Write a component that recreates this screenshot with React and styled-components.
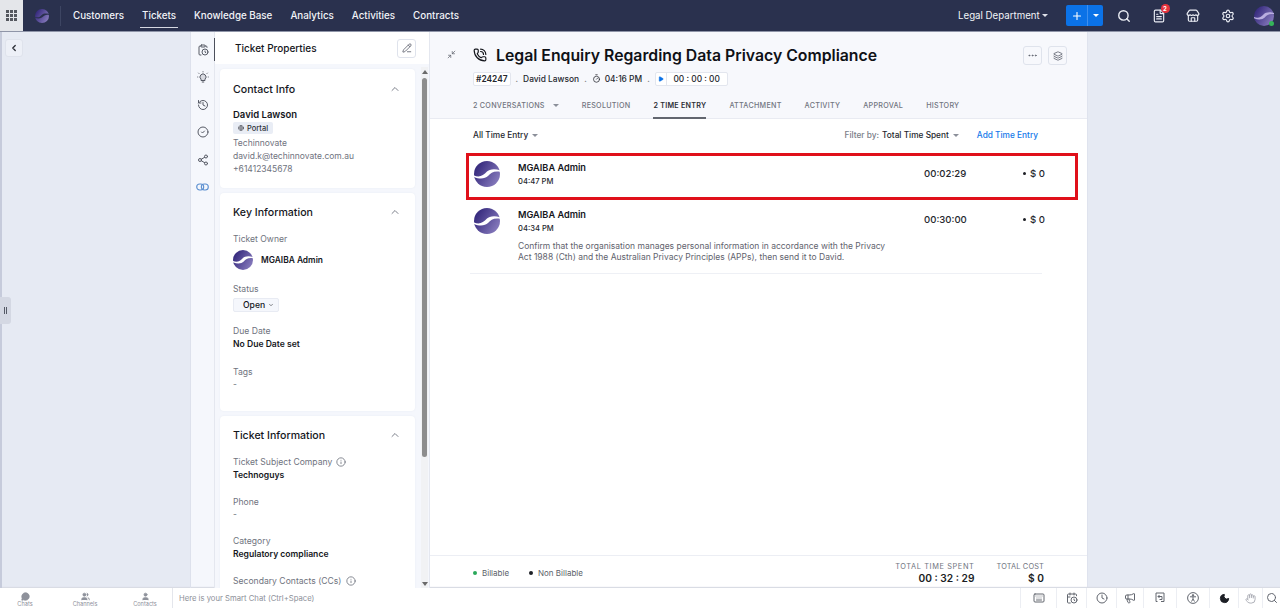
import React from 'react';
import styled, { createGlobalStyle } from 'styled-components';
import {
  CalendarClock,
  ChevronDown,
  ChevronLeft,
  ChevronUp,
  CircleCheck,
  ClipboardClock,
  Clock,
  Ellipsis,
  FileText,
  Globe,
  Hand,
  History,
  Info,
  Keyboard,
  Layers,
  Megaphone,
  MessageCircle,
  Minimize2,
  Moon,
  PencilLine,
  PhoneCall,
  Play,
  Plus,
  Search,
  Settings,
  Share2,
  Store,
  Timer,
  User,
  Users
} from 'lucide-react';

const GlobalStyle = createGlobalStyle`
  html, body {
    margin: 0;
    height: 100%;
    overflow: hidden;
    font-family: Inter, "Liberation Sans", sans-serif;
    color: #14161c;
  }
  #root {
    height: 100%;
  }
  * {
    box-sizing: border-box;
  }
`;

const Page = styled.div`
  width: 1280px;
  height: 608px;
  display: flex;
  flex-direction: column;
  background: #e6eaf3;
`;

const TopBar = styled.header`
  height: 32px;
  flex: none;
  display: flex;
  align-items: center;
  background: #2a314e;
  border-bottom: 1px solid #8f95a8;
  color: #f2f4f8;
`;

const AppsBox = styled.div`
  width: 23px;
  height: 31px;
  background: #e4e6ea;
  display: grid;
  grid-template-columns: repeat(3, 3px);
  grid-auto-rows: 3px;
  gap: 1px;
  align-content: center;
  justify-content: center;
`;

const AppsDot = styled.span`
  background: #55585f;
`;

const LogoSlot = styled.div`
  width: 38px;
  height: 20px;
  margin-right: 12px;
  padding-left: 12px;
  display: flex;
  align-items: center;
  border-right: 1px solid #3d4562;
`;

const Nav = styled.nav`
  display: flex;
  gap: 18px;
  align-self: stretch;
`;

const NavItem = styled.a`
  position: relative;
  display: flex;
  align-items: center;
  font-size: 9.8px;
  font-weight: 500;

  ${p => p.$active && `
    &::after {
      content: '';
      position: absolute;
      left: -2px;
      right: -2px;
      bottom: 3px;
      height: 1px;
      background: #d5d8e2;
    }
  `}
`;

const TopRight = styled.div`
  margin-left: auto;
  display: flex;
  align-items: center;
  height: 100%;
`;

const Department = styled.span`
  font-size: 9.7px;
  width: 84px;
  white-space: nowrap;
`;

const Caret = styled.span`
  display: inline-block;
  width: 0;
  height: 0;
  flex: none;
  border-left: ${p => p.$size || 3}px solid transparent;
  border-right: ${p => p.$size || 3}px solid transparent;
  border-top: ${p => p.$size || 3}px solid ${p => p.$color || '#8b8f99'};
`;

const SplitButton = styled.div`
  width: 37px;
  height: 21px;
  margin-left: 18px;
  display: flex;
  border-radius: 2px;
  background: #0b72e7;
  color: #fff;

  & > span {
    display: flex;
    align-items: center;
    justify-content: center;
  }
  & > span:first-child {
    width: 22px;
    border-right: 1px solid #3f8fee;
  }
  & > span:last-child {
    flex: 1;
  }
`;

const TopIcons = styled.div`
  display: flex;
  margin-left: 4px;
`;

const TopIcon = styled.span`
  position: relative;
  display: flex;
  justify-content: center;
  width: 34.5px;
  color: #e9ecf3;
`;

const Badge = styled.span`
  position: absolute;
  top: -5px;
  left: 19px;
  width: 9px;
  height: 9px;
  border-radius: 50%;
  background: #e5333d;
  color: #fff;
  font-size: 6px;
  line-height: 9px;
  font-weight: 700;
  text-align: center;
`;

const AvatarSlot = styled.span`
  position: relative;
  display: flex;
  margin: 0 6px 0 9px;

  &::after {
    content: '';
    position: absolute;
    right: 0;
    bottom: 0;
    width: 5px;
    height: 5px;
    border-radius: 50%;
    background: #35b45a;
  }
`;

const Body = styled.div`
  flex: 1;
  min-height: 0;
  display: flex;
`;

const LeftGutter = styled.aside`
  position: relative;
  width: 191px;
  flex: none;
  padding: 7px 0 0 3px;
  border-left: 2px solid #c6cbdb;
  border-right: 1px solid #dde1ec;
`;

const IconButton = styled.button`
  width: ${p => p.$size || 18}px;
  height: ${p => p.$size || 18}px;
  padding: 0;
  display: flex;
  align-items: center;
  justify-content: center;
  background: ${p => p.$bg || 'transparent'};
  border: 1px solid #dfe3ec;
  border-radius: 3px;
  color: #5e626d;
`;

const Handle = styled.div`
  position: absolute;
  left: -2px;
  top: 265px;
  width: 11px;
  height: 27px;
  display: flex;
  align-items: center;
  justify-content: center;
  gap: 1px;
  background: #d4d8e3;
  border-radius: 0 3px 3px 0;

  & > i {
    width: 1px;
    height: 7px;
    background: #555a66;
  }
`;

const Rail = styled.div`
  width: 23px;
  flex: none;
  display: flex;
  flex-direction: column;
  align-items: center;
  background: #f5f7fc;
  padding-top: 12px;
  gap: 15.4px;
  color: #565a65;
`;

const RailIcon = styled.span`
  display: flex;
  height: 12px;
  color: ${p => p.$color || 'inherit'};
`;

const Properties = styled.section`
  position: relative;
  width: 216px;
  flex: none;
  display: flex;
  flex-direction: column;
  background: #f5f7fc;
  border-left: 1px solid #e4e7ef;
  border-right: 1px solid #e4e7ef;

  &::before {
    content: '';
    position: absolute;
    left: -1px;
    top: 6px;
    width: 1px;
    height: 23px;
    background: #4c505c;
  }
`;

const PropHeader = styled.div`
  height: 32px;
  flex: none;
  display: flex;
  align-items: center;
  justify-content: space-between;
  padding: 0 13px 0 20px;
  background: #fff;
  font-size: 10px;
  font-weight: 500;
`;

const PropBody = styled.div`
  flex: 1;
  min-height: 0;
  overflow: hidden;
  display: flex;
  flex-direction: column;
  gap: 5px;
  padding: 5px 14px 0 5px;
`;

const Card = styled.div`
  flex: none;
  height: ${p => p.$height}px;
  background: #fff;
  border-radius: 4px;
  box-shadow: 0 0 2px #e7eaf1;
  padding: ${p => p.$top ?? 13}px 14px 0 13px;
`;

const CardTitle = styled.div`
  display: flex;
  justify-content: space-between;
  align-items: center;
  height: 12px;
  margin-bottom: ${p => p.$gap ?? 15}px;
  font-size: 10.6px;
  font-weight: 500;
  color: #14161c;

  & > svg {
    color: #7d818c;
  }
`;

const ContactName = styled.div`
  font-size: 9.5px;
  font-weight: 600;
  line-height: 12px;
`;

const PortalTag = styled.span`
  width: 40px;
  height: 12px;
  margin: 1px 0 3px;
  display: flex;
  align-items: center;
  justify-content: center;
  gap: 3px;
  background: #e9edf5;
  border-radius: 2px;
  font-size: 7.5px;
  font-weight: 500;
  color: #30333b;
`;

const MutedLine = styled.div`
  font-size: 8.5px;
  line-height: 13px;
  color: #6f737e;
`;

const Field = styled.div`
  margin-bottom: ${p => p.$gap ?? 14}px;
`;

const FieldLabel = styled.div`
  display: flex;
  align-items: center;
  gap: 4px;
  font-size: 8.6px;
  line-height: 12px;
  color: #6f737e;
`;

const FieldValue = styled.div`
  font-size: 8.6px;
  line-height: 14px;
  font-weight: 600;
  color: #15171c;
`;

const Owner = styled.div`
  display: flex;
  align-items: center;
  gap: 8px;
  margin-top: 5px;
  font-size: 8.4px;
  font-weight: 600;
`;

const StatusPick = styled.span`
  width: 46px;
  height: 14px;
  margin-top: 3px;
  display: flex;
  align-items: center;
  gap: 3px;
  padding-left: 9px;
  background: #f5f7fc;
  border: 1px solid #e8ebf3;
  border-radius: 2px;
  font-size: 8.6px;
  font-weight: 500;
`;

const Scrollbar = styled.div`
  position: absolute;
  top: 35px;
  right: 1px;
  bottom: 0;
  width: 7px;
  display: flex;
  flex-direction: column;
  align-items: center;
  background: #f1f2f4;

  & > i {
    width: 5px;
    height: 379px;
    margin: 2px 0 auto;
    border-radius: 3px;
    background: #8d8d8d;
  }
`;

const ScrollArrow = styled.span`
  width: 0;
  height: 0;
  border-left: 3px solid transparent;
  border-right: 3px solid transparent;
  ${p => (p.$up ? 'border-bottom' : 'border-top')}: 4px solid #6a6a6a;
  margin: 3px 0 2px;
`;

const Main = styled.main`
  width: 658px;
  flex: none;
  display: flex;
  flex-direction: column;
  background: #fff;
  border-right: 1px solid #dfe3ee;
`;

const TicketHead = styled.div`
  position: relative;
  height: 87px;
  flex: none;
  padding: 12px 0 0 43px;
  background: #f7f8fc;
  border-bottom: 1px solid #e9ebf2;
`;

const TitleRow = styled.div`
  display: flex;
  align-items: center;
  gap: 9px;
  height: 22px;
`;

const Title = styled.h1`
  margin: 0;
  font-size: 15.8px;
  font-weight: 600;
  white-space: nowrap;
  color: #0f1116;
`;

const CollapseIcon = styled.span`
  position: absolute;
  left: 17px;
  top: 18px;
  display: flex;
  color: #646873;
`;

const HeadActions = styled.div`
  position: absolute;
  top: 14px;
  right: 20px;
  display: flex;
  gap: 6px;
`;

const MetaRow = styled.div`
  display: flex;
  align-items: center;
  height: 15px;
  margin-top: 5px;
  font-size: 8.4px;
  font-weight: 500;
  color: #25272e;
`;

const IdTag = styled.span`
  height: 14px;
  padding: 0 2px;
  display: flex;
  align-items: center;
  background: #fff;
  border: 1px solid #e3e6ee;
  border-radius: 2px;
  font-weight: 600;
`;

const Sep = styled.span`
  margin: 0 5px;
  color: #888;
`;

const ClockText = styled.span`
  display: flex;
  align-items: center;
  gap: 4px;
`;

const TimerBox = styled.span`
  height: 14px;
  width: 73px;
  display: flex;
  align-items: center;
  background: #fff;
  border: 1px solid #e3e6ee;
  border-radius: 2px;

  & > span:first-child {
    width: 11px;
    height: 100%;
    display: flex;
    align-items: center;
    justify-content: center;
    border-right: 1px solid #e3e6ee;
    color: #0b72e7;
  }
  & > span:last-child {
    flex: 1;
    text-align: center;
  }
`;

const Tabs = styled.div`
  display: flex;
  gap: 23px;
  margin-top: 11px;
  height: 22px;
`;

const Tab = styled.span`
  display: flex;
  align-items: flex-start;
  gap: 8px;
  padding-top: 4px;
  font-size: 7.2px;
  font-weight: ${p => (p.$active ? 600 : 500)};
  letter-spacing: 0.25px;
  white-space: nowrap;
  color: ${p => (p.$active ? '#2b2e36' : '#71757f')};
  border-bottom: 2px solid ${p => (p.$active ? '#62666f' : 'transparent')};
  & > span {
    margin-top: 3px;
  }
`;

const Toolbar = styled.div`
  height: 34px;
  flex: none;
  display: flex;
  align-items: center;
  padding: 0 49px 2px 43px;
  font-size: 8.3px;
  font-weight: 500;
  color: #25272e;
`;

const ToolPick = styled.span`
  display: flex;
  align-items: center;
  gap: 4px;
`;

const FilterLabel = styled.span`
  margin-left: auto;
  margin-right: 3px;
  color: #7a7e88;
`;

const AddLink = styled.a`
  margin-left: 18px;
  color: #1479ea;
`;

const EntryList = styled.div`
  flex: 1;
  min-height: 0;
  padding-left: 36px;
`;

const Entry = styled.div`
  width: 612px;
  height: ${p => (p.$flagged ? '47px' : 'auto')};
  display: grid;
  grid-template-columns: 44px 406px 99px 1fr;
  border: 3px solid ${p => (p.$flagged ? '#e0101a' : 'transparent')};
  padding: 5px 0 0 5px;
`;

const EntryName = styled.div`
  font-size: 9.2px;
  font-weight: 600;
  line-height: 13px;
`;

const EntryTime = styled.div`
  font-size: 7.6px;
  font-weight: 500;
  line-height: 13px;
  margin-top: 1px;
  color: #25272e;
`;

const EntryNote = styled.div`
  width: 375px;
  margin-top: 6px;
  font-size: 8.5px;
  line-height: 11px;
  color: #5f636e;
`;

const Duration = styled.div`
  padding-top: ${p => p.$top}px;
  font-size: 9.6px;
  font-weight: 500;
  color: #25272e;
`;

const Cost = styled(Duration)`
  display: flex;
  gap: 4px;
  align-items: center;
  height: fit-content;
  &::before {
    content: '';
    width: 3px;
    height: 3px;
    border-radius: 50%;
    background: #1d1f25;
  }
`;

const Divider = styled.hr`
  width: 572px;
  margin: 7px 0 0 4px;
  border: 0;
  border-top: 1px solid #eef0f5;
`;

const Summary = styled.div`
  height: 33px;
  flex: none;
  display: flex;
  padding: 0 43px 0 43px;
  border-top: 1px solid #eceef4;
`;

const Legend = styled.span`
  display: flex;
  align-items: center;
  gap: 5px;
  margin-right: 20px;
  padding-top: 2px;
  font-size: 8px;
  color: #5b5f69;

  &::before {
    content: '';
    width: 4px;
    height: 4px;
    border-radius: 50%;
    background: ${p => p.$color};
  }
`;

const Totals = styled.div`
  margin-left: ${p => (p.$auto ? 'auto' : '22px')};
  padding-top: 6px;
  text-align: right;
  white-space: nowrap;
`;

const TotalLabel = styled.div`
  font-size: 7.4px;
  line-height: 10px;
  letter-spacing: ${p => p.$spacing}px;
  color: #71757f;
`;

const TotalValue = styled.div`
  font-size: 10.2px;
  line-height: 12px;
  font-weight: 600;
  color: #1b1d23;
`;

const RightGutter = styled.div`
  flex: 1;
`;

const BottomBar = styled.footer`
  height: 20px;
  flex: none;
  display: flex;
  background: #fff;
  box-shadow: 0 -1px 1px #d9dce4;
`;

const ChatTabs = styled.div`
  width: 173px;
  flex: none;
  display: flex;
  border-right: 1px solid #e4e6ec;
`;

const ChatTab = styled.span`
  width: ${p => p.$w}px;
  display: flex;
  flex-direction: column;
  align-items: center;
  justify-content: flex-end;
  color: #8e919b;
  font-size: 5.6px;
  line-height: 6px;
  padding-bottom: 1px;
`;

const SmartChat = styled.div`
  flex: 1;
  display: flex;
  align-items: center;
  padding-left: 6px;
  font-size: 7.7px;
  color: #8d9099;
`;

const Tray = styled.div`
  display: flex;
`;

const TrayCell = styled.span`
  width: ${p => p.$w}px;
  display: flex;
  align-items: center;
  justify-content: center;
  border-left: 1px solid #eceef3;
  color: ${p => p.$color || '#62666f'};
`;

const S = ({ size = 26, wave = '#fff' }) => {
  const id = React.useId();
  return (
    <svg width={size} height={size} viewBox="0 0 26 26" style={{ flex: 'none' }}>
      <defs>
        <linearGradient id={id} x1="0" y1="0.2" x2="1" y2="0.8">
          <stop offset="0" stopColor="#2f2378" />
          <stop offset="1" stopColor="#8b7fc0" />
        </linearGradient>
      </defs>
      <circle cx="13" cy="13" r="13" fill={`url(#${id})`} />
      <path
        d="M-1 14C5 17 9 15 13 10.500C15 8.500 20 7 27 9.500V11C20 9.500 17 12 14 15C11 18 5 18.500 -1 15.500Z"
        fill={wave}
      />
    </svg>
  );
};

const BulbIcon = () => (
  <svg width="12" height="12" viewBox="0 0 12 12" fill="none" stroke="currentColor" strokeWidth="1">
    <path d="M4 9.500V8.200A3 3 0 1 1 8 8.200V9.500Z" fill="#d9dbe2" />
    <path d="M4.800 11H7.200M6 .3V1.300M1.300 1.800L2.200 2.700M10.700 1.800L9.800 2.700M.3 6H1.200M10.800 6H11.700" />
  </svg>
);

const LinkIcon = () => (
  <svg width="13" height="12" viewBox="0 0 13 12" fill="none" stroke="currentColor" strokeWidth="1.100">
    <rect x="0.700" y="3" width="7" height="6" rx="3" />
    <rect x="5.300" y="3" width="7" height="6" rx="3" />
  </svg>
);

const ReturnIcon = () => (
  <svg width="12" height="12" viewBox="0 0 12 12" fill="none" stroke="currentColor" strokeWidth="1">
    <path d="M3.500 9.500H2V1H10V9.500H7" />
    <path d="M8 4.500H4L5.500 3M4 4.500L5.500 6M8 4.500V7.500H5.500" />
  </svg>
);

const PersonRing = () => (
  <svg width="12" height="12" viewBox="0 0 12 12" fill="none" stroke="currentColor" strokeWidth="1">
    <circle cx="6" cy="6" r="5.400" />
    <circle cx="6" cy="3.300" r="0.700" fill="currentColor" />
    <path d="M3 4.800H9M6 4.800V7M6 7L4.500 9.500M6 7L7.500 9.500" />
  </svg>
);

const appDots = Array.from({ length: 9 }, (_, i) => i);
const navItems = ['Customers', 'Tickets', 'Knowledge Base', 'Analytics', 'Activities', 'Contracts'];
const tabs = ['RESOLUTION', '2 TIME ENTRY', 'ATTACHMENT', 'ACTIVITY', 'APPROVAL', 'HISTORY'];

export default function App() {
  return (
    <Page>
      <GlobalStyle />
      <TopBar>
        <AppsBox>
          {appDots.map(i => (
            <AppsDot key={i} />
          ))}
        </AppsBox>
        <LogoSlot>
          <S size={14} wave="#2a314e" />
        </LogoSlot>
        <Nav>
          {navItems.map(item => (
            <NavItem key={item} $active={item === 'Tickets'}>
              {item}
            </NavItem>
          ))}
        </Nav>
        <TopRight>
          <Department>Legal Department</Department>
          <Caret $color="#dfe2ea" />
          <SplitButton>
            <span>
              <Plus size={12} strokeWidth={2.2} />
            </span>
            <span>
              <Caret $color="#fff" />
            </span>
          </SplitButton>
          <TopIcons>
            <TopIcon>
              <Search size={14} strokeWidth={2.4} />
            </TopIcon>
            <TopIcon>
              <FileText size={14} />
              <Badge>2</Badge>
            </TopIcon>
            <TopIcon>
              <Store size={14} />
            </TopIcon>
            <TopIcon>
              <Settings size={14} />
            </TopIcon>
          </TopIcons>
          <AvatarSlot>
            <S size={20} wave="#b9aee0" />
          </AvatarSlot>
        </TopRight>
      </TopBar>

      <Body>
        <LeftGutter>
          <IconButton $bg="#edf0f7">
            <ChevronLeft size={10} strokeWidth={3} color="#2a2d35" />
          </IconButton>
          <Handle>
            <i />
            <i />
          </Handle>
        </LeftGutter>

        <Rail>
          <RailIcon>
            <ClipboardClock size={12} />
          </RailIcon>
          <RailIcon>
            <BulbIcon />
          </RailIcon>
          <RailIcon>
            <History size={12} />
          </RailIcon>
          <RailIcon>
            <CircleCheck size={12} />
          </RailIcon>
          <RailIcon>
            <Share2 size={12} />
          </RailIcon>
          <RailIcon $color="#5b8fd0">
            <LinkIcon />
          </RailIcon>
        </Rail>

        <Properties>
          <PropHeader>
            Ticket Properties
            <IconButton $size={19} $bg="#fff">
              <PencilLine size={10} />
            </IconButton>
          </PropHeader>
          <PropBody>
            <Card $height={119} $top={14}>
              <CardTitle $gap={14}>
                Contact Info
                <ChevronUp size={12} />
              </CardTitle>
              <ContactName>David Lawson</ContactName>
              <PortalTag>
                <Globe size={6} />
                Portal
              </PortalTag>
              <MutedLine>Techinnovate</MutedLine>
              <MutedLine>david.k@techinnovate.com.au</MutedLine>
              <MutedLine>+61412345678</MutedLine>
            </Card>
            <Card $height={218}>
              <CardTitle>
                Key Information
                <ChevronUp size={12} />
              </CardTitle>
              <Field $gap={13}>
                <FieldLabel>Ticket Owner</FieldLabel>
                <Owner>
                  <S size={20} />
                  MGAIBA Admin
                </Owner>
              </Field>
              <Field $gap={13}>
                <FieldLabel>Status</FieldLabel>
                <StatusPick>
                  Open
                  <ChevronDown size={6} />
                </StatusPick>
              </Field>
              <Field $gap={15}>
                <FieldLabel>Due Date</FieldLabel>
                <FieldValue>No Due Date set</FieldValue>
              </Field>
              <Field>
                <FieldLabel>Tags</FieldLabel>
                <MutedLine>-</MutedLine>
              </Field>
            </Card>
            <Card $height={200}>
              <CardTitle>
                Ticket Information
                <ChevronUp size={12} />
              </CardTitle>
              <Field>
                <FieldLabel>
                  Ticket Subject Company
                  <Info size={10} />
                </FieldLabel>
                <FieldValue>Technoguys</FieldValue>
              </Field>
              <Field>
                <FieldLabel>Phone</FieldLabel>
                <MutedLine>-</MutedLine>
              </Field>
              <Field>
                <FieldLabel>Category</FieldLabel>
                <FieldValue>Regulatory compliance</FieldValue>
              </Field>
              <Field>
                <FieldLabel>
                  Secondary Contacts (CCs)
                  <Info size={10} />
                </FieldLabel>
              </Field>
            </Card>
          </PropBody>
          <Scrollbar>
            <ScrollArrow $up />
            <i />
            <ScrollArrow />
          </Scrollbar>
        </Properties>

        <Main>
          <TicketHead>
            <CollapseIcon>
              <Minimize2 size={9} />
            </CollapseIcon>
            <TitleRow>
              <PhoneCall size={14} />
              <Title>Legal Enquiry Regarding Data Privacy Compliance</Title>
            </TitleRow>
            <HeadActions>
              <IconButton $size={19}>
                <Ellipsis size={11} />
              </IconButton>
              <IconButton $size={19}>
                <Layers size={10} />
              </IconButton>
            </HeadActions>
            <MetaRow>
              <IdTag>#24247</IdTag>
              <Sep>.</Sep>
              David Lawson
              <Sep>.</Sep>
              <ClockText>
                <Timer size={9} />
                04:16 PM
              </ClockText>
              <Sep>.</Sep>
              <TimerBox>
                <span>
                  <Play size={6} fill="currentColor" />
                </span>
                <span>00 : 00 : 00</span>
              </TimerBox>
            </MetaRow>
            <Tabs>
              <Tab>
                2 CONVERSATIONS
                <Caret />
              </Tab>
              {tabs.map(tab => (
                <Tab key={tab} $active={tab === '2 TIME ENTRY'}>
                  {tab}
                </Tab>
              ))}
            </Tabs>
          </TicketHead>

          <Toolbar>
            <ToolPick>
              All Time Entry
              <Caret />
            </ToolPick>
            <FilterLabel>Filter by:</FilterLabel>
            <ToolPick>
              Total Time Spent
              <Caret />
            </ToolPick>
            <AddLink>Add Time Entry</AddLink>
          </Toolbar>

          <EntryList>
            <Entry $flagged>
              <S />
              <div>
                <EntryName>MGAIBA Admin</EntryName>
                <EntryTime>04:47 PM</EntryTime>
              </div>
              <Duration $top={7}>00:02:29</Duration>
              <Cost $top={7}>$ 0</Cost>
            </Entry>
            <Entry>
              <S />
              <div>
                <EntryName>MGAIBA Admin</EntryName>
                <EntryTime>04:34 PM</EntryTime>
                <EntryNote>
                  Confirm that the organisation manages personal information in accordance with the Privacy Act 1988
                  (Cth) and the Australian Privacy Principles (APPs), then send it to David.
                </EntryNote>
              </div>
              <Duration $top={6}>00:30:00</Duration>
              <Cost $top={6}>$ 0</Cost>
            </Entry>
            <Divider />
          </EntryList>

          <Summary>
            <Legend $color="#2aa85a">Billable</Legend>
            <Legend $color="#1d1f25">Non Billable</Legend>
            <Totals $auto>
              <TotalLabel $spacing={0.6}>TOTAL TIME SPENT</TotalLabel>
              <TotalValue>00 : 32 : 29</TotalValue>
            </Totals>
            <Totals>
              <TotalLabel $spacing={0.15}>TOTAL COST</TotalLabel>
              <TotalValue>$ 0</TotalValue>
            </Totals>
          </Summary>
        </Main>
        <RightGutter />
      </Body>

      <BottomBar>
        <ChatTabs>
          <ChatTab $w={50}>
            <MessageCircle size={9} fill="currentColor" />
            Chats
          </ChatTab>
          <ChatTab $w={70}>
            <Users size={9} fill="currentColor" />
            Channels
          </ChatTab>
          <ChatTab $w={50}>
            <User size={9} fill="currentColor" />
            Contacts
          </ChatTab>
        </ChatTabs>
        <SmartChat>Here is your Smart Chat (Ctrl+Space)</SmartChat>
        <Tray>
          <TrayCell $w={36}>
            <Keyboard size={12} />
          </TrayCell>
          <TrayCell $w={30}>
            <CalendarClock size={12} />
          </TrayCell>
          <TrayCell $w={30}>
            <Clock size={12} />
          </TrayCell>
          <TrayCell $w={27}>
            <Megaphone size={12} />
          </TrayCell>
          <TrayCell $w={33}>
            <ReturnIcon />
          </TrayCell>
          <TrayCell $w={33}>
            <PersonRing />
          </TrayCell>
          <TrayCell $w={29}>
            <Moon size={11} fill="#1d1f25" color="#1d1f25" />
          </TrayCell>
          <TrayCell $w={24} $color="#a6a9b1">
            <Hand size={11} />
          </TrayCell>
          <TrayCell $w={18}>
            <Search size={12} />
          </TrayCell>
        </Tray>
      </BottomBar>
    </Page>
  );
}
